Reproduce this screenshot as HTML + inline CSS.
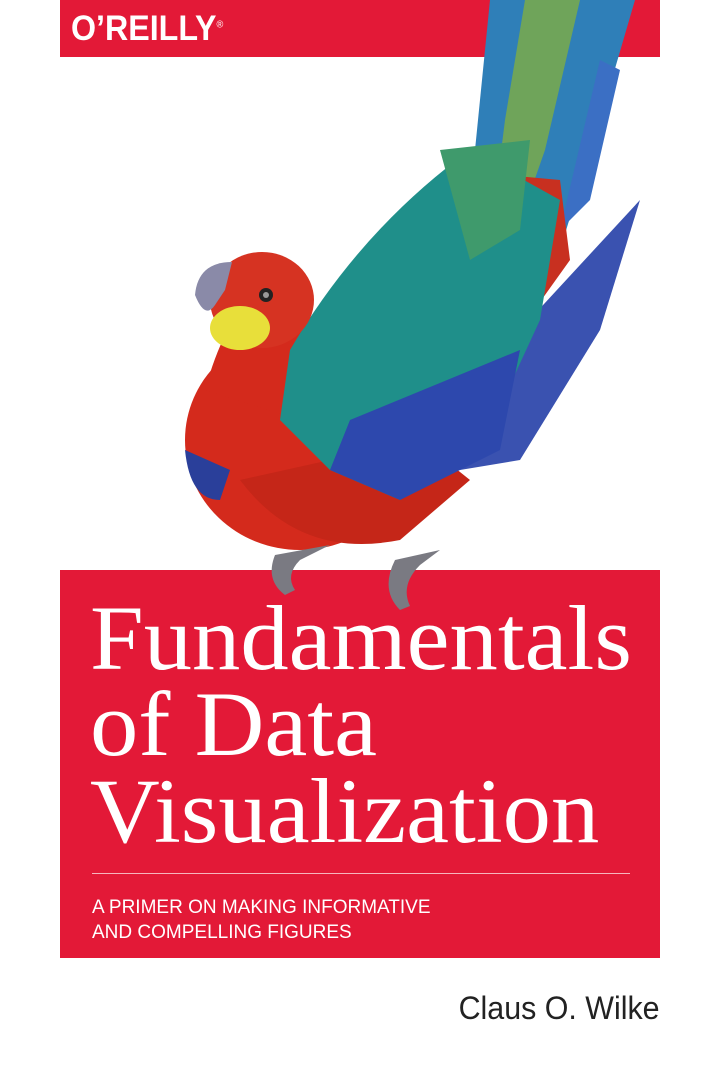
<!DOCTYPE html>
<html><head><meta charset="utf-8"><style>
html,body{margin:0;padding:0;background:#fff}
body{width:720px;height:1080px;position:relative;overflow:hidden;font-family:"Liberation Sans",sans-serif}
.bar{position:absolute;left:60px;top:0;width:600px;height:57px;background:#e31937}
.logo{position:absolute;left:71px;top:9px;color:#fff;font-size:35px;font-weight:bold;transform:scaleX(.92);transform-origin:left}
.box{position:absolute;left:60px;top:570px;width:600px;height:388px;background:#e31937}
.t{position:absolute;left:90px;color:#fff;font-family:"Liberation Serif",serif;font-size:92px;line-height:1;white-space:nowrap;transform:scaleX(1.05);transform-origin:left}
.rule{position:absolute;left:92px;top:873px;width:538px;height:1px;background:#f6b5be}
.sub{position:absolute;left:92px;color:#fff;font-size:19px;transform:scaleX(1.0);transform-origin:left;white-space:nowrap}
.auth{position:absolute;right:60px;top:990px;font-size:32px;color:#222;transform:scaleX(.95);transform-origin:right}
svg{position:absolute;left:0;top:0}
</style></head><body>
<div class="bar"></div>
<div class="logo">O’REILLY<sup style="font-size:10px;font-weight:normal">®</sup></div>
<div class="box"></div>
<svg width="720" height="1080" viewBox="0 0 720 1080">
 <path d="M490 0 L635 0 L600 120 L560 250 L500 330 L450 320 L475 150 Z" fill="#2f7fb8"/>
 <path d="M525 0 L580 0 L545 150 L510 250 L490 240 L505 120 Z" fill="#6fa45a"/>
 <path d="M600 60 L620 70 L590 200 L560 230 Z" fill="#3b6fc4"/>
 <path d="M640 200 L600 330 L520 460 L460 470 L520 330 Z" fill="#3a52b0"/>
 <path d="M450 170 L560 180 L570 260 L520 330 L470 300 Z" fill="#c83020"/>
 <ellipse cx="300" cy="440" rx="115" ry="110" fill="#d42a1c"/>
 <path d="M205 390 Q230 300 270 290 L330 330 L300 420 Z" fill="#d42a1c"/>
 <path d="M240 480 Q300 560 400 540 L470 480 L420 440 Z" fill="#c52618"/>
 <path d="M185 450 Q190 500 220 500 L230 470 Z" fill="#2a3f9a"/>
 <path d="M290 350 Q360 230 470 150 L560 200 L540 320 L480 450 L400 500 L330 470 L280 420 Z" fill="#1f8f8a"/>
 <path d="M440 150 L530 140 L520 230 L470 260 Z" fill="#3f9a6c"/>
 <path d="M350 420 L520 350 L500 450 L400 500 L330 470 Z" fill="#2d48ad"/>
 <ellipse cx="262" cy="300" rx="52" ry="48" fill="#d63322"/>
 <ellipse cx="240" cy="328" rx="30" ry="22" fill="#e8df3a"/>
 <path d="M232 262 Q198 262 195 295 Q205 320 215 305 L225 290 Z" fill="#8a8aa8"/>
 <circle cx="266" cy="295" r="7" fill="#222"/><circle cx="266" cy="295" r="3" fill="#999"/>
 <path d="M275 555 Q265 580 285 595 L295 590 Q285 575 300 560 L330 545 Z" fill="#7a7a82"/>
 <path d="M395 560 Q380 590 400 610 L410 606 Q400 585 420 565 L440 550 Z" fill="#7a7a82"/>
</svg>
<div class="t" style="top:592px">Fundamentals</div>
<div class="t" style="top:678px">of Data</div>
<div class="t" style="top:765px">Visualization</div>
<div class="rule"></div>
<div class="sub" style="top:897px">A PRIMER ON MAKING INFORMATIVE</div>
<div class="sub" style="top:922px">AND COMPELLING FIGURES</div>
<div class="auth">Claus O. Wilke</div>
</body></html>
